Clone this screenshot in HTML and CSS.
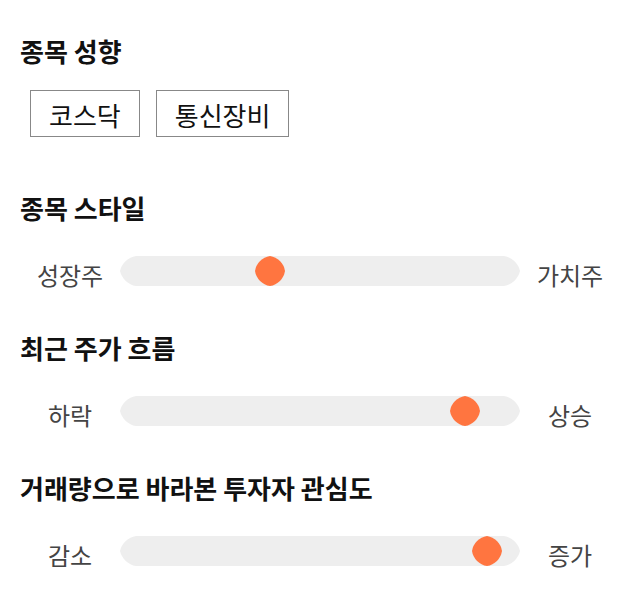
FILE: index.html
```html
<!DOCTYPE html>
<html>
<head>
    <title>종목 분석</title>
    <link rel="stylesheet" href="styles.css">
</head>
<body>
    <section class="block first">
        <h2 class="title">종목 성향</h2>
        <div class="tags">
            <span class="tag">코스닥</span>
            <span class="tag">통신장비</span>
        </div>
    </section>

    <section class="block">
        <h2 class="title">종목 스타일</h2>
        <div class="scale">
            <span class="label">성장주</span>
            <div class="track">
                <svg width="400" height="30" viewBox="0 0 400 30"><path d="M16 0 H384 A20 20 0 0 1 400 15 A20 20 0 0 1 384 30 H16 A20 20 0 0 1 0 15 A20 20 0 0 1 16 0 Z" fill="#eeeeee"/></svg>
                <svg class="thumb" style="left: 135px" width="30" height="30" viewBox="0 0 30 30"><path d="M15 0 A18 18 0 0 1 30 15 A18 18 0 0 1 15 30 A18 18 0 0 1 0 15 A18 18 0 0 1 15 0 Z" fill="#ff7540"/></svg>
            </div>
            <span class="label">가치주</span>
        </div>
    </section>

    <section class="block">
        <h2 class="title">최근 주가 흐름</h2>
        <div class="scale">
            <span class="label">하락</span>
            <div class="track">
                <svg width="400" height="30" viewBox="0 0 400 30"><path d="M16 0 H384 A20 20 0 0 1 400 15 A20 20 0 0 1 384 30 H16 A20 20 0 0 1 0 15 A20 20 0 0 1 16 0 Z" fill="#eeeeee"/></svg>
                <svg class="thumb" style="left: 330px" width="30" height="30" viewBox="0 0 30 30"><path d="M15 0 A18 18 0 0 1 30 15 A18 18 0 0 1 15 30 A18 18 0 0 1 0 15 A18 18 0 0 1 15 0 Z" fill="#ff7540"/></svg>
            </div>
            <span class="label">상승</span>
        </div>
    </section>

    <section class="block">
        <h2 class="title">거래량으로 바라본 투자자 관심도</h2>
        <div class="scale">
            <span class="label">감소</span>
            <div class="track">
                <svg width="400" height="30" viewBox="0 0 400 30"><path d="M16 0 H384 A20 20 0 0 1 400 15 A20 20 0 0 1 384 30 H16 A20 20 0 0 1 0 15 A20 20 0 0 1 16 0 Z" fill="#eeeeee"/></svg>
                <svg class="thumb" style="left: 352px" width="30" height="30" viewBox="0 0 30 30"><path d="M15 0 A18 18 0 0 1 30 15 A18 18 0 0 1 15 30 A18 18 0 0 1 0 15 A18 18 0 0 1 15 0 Z" fill="#ff7540"/></svg>
            </div>
            <span class="label">증가</span>
        </div>
    </section>
</body>
</html>
```

FILE: styles.css
```css
body {
    margin: 0;
    padding: 36px 20px 0 20px;
    font-family: "Noto Sans CJK KR", "Noto Sans", sans-serif;
    background: #ffffff;
    color: #111111;
}

.block {
    margin-bottom: 47px;
}

.block.first {
    margin-bottom: 56px;
}

.title {
    margin: 0 0 33px 0;
    font-size: 26px;
    font-weight: bold;
    line-height: 30px;
    color: #111111;
}

.tags {
    display: flex;
    gap: 16px;
    padding-left: 10px;
    margin-top: -9px;
}

.tag {
    display: inline-block;
    height: 45px;
    line-height: 47px;
    padding: 0 18px;
    border: 1px solid #888888;
    font-size: 26px;
    color: #111111;
}

.scale {
    display: flex;
    align-items: center;
    height: 30px;
}

.label {
    width: 100px;
    text-align: center;
    font-size: 24px;
    color: #444444;
    line-height: 30px;
    padding-top: 8px;
}

.track {
    position: relative;
    width: 400px;
    height: 30px;
}

.track svg {
    display: block;
}

.thumb {
    position: absolute;
    top: 0;
}
```
